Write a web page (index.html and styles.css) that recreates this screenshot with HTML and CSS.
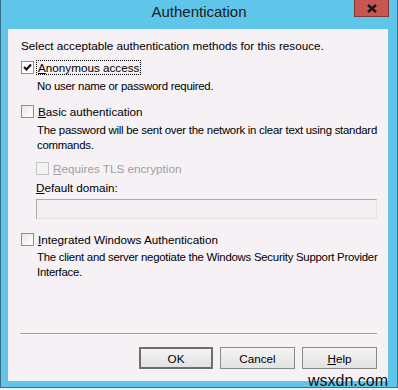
FILE: index.html
```html
<!DOCTYPE html>
<html>
<head>
<meta charset="utf-8">
<link rel="stylesheet" href="styles.css">
</head>
<body>
<div class="window">
  <div class="titlebar">
    <span class="title">Authentication</span>
    <div class="close"><svg width="10" height="9" viewBox="0 0 10 9"><path d="M1 1 L9 8 M9 1 L1 8" stroke="#1a1a1a" stroke-width="2.4"/></svg></div>
  </div>
  <div class="panel">
    <p class="intro">Select acceptable authentication methods for this resouce.</p>

    <div class="option first">
      <span class="box checked"><svg width="9" height="9" viewBox="0 0 9 9"><path d="M1 4 L3.5 6.5 L8 1.5" fill="none" stroke="#111" stroke-width="2.2"/></svg></span>
      <span class="label focus"><u>A</u>nonymous access</span>
    </div>
    <p class="desc">No user name or password required.</p>

    <div class="option">
      <span class="box"></span>
      <span class="label"><u>B</u>asic authentication</span>
    </div>
    <p class="desc">The password will be sent over the network in clear text using standard<br>commands.</p>

    <div class="option sub disabled">
      <span class="box"></span>
      <span class="label"><u>R</u>equires TLS encryption</span>
    </div>
    <p class="field-label"><u>D</u>efault domain:</p>
    <div class="input"></div>

    <div class="option after-input">
      <span class="box"></span>
      <span class="label"><u>I</u>ntegrated Windows Authentication</span>
    </div>
    <p class="desc last">The client and server negotiate the Windows Security Support Provider<br>Interface.</p>

    <div class="spacer"></div>
    <div class="separator"></div>
    <div class="buttons">
      <button class="btn default">OK</button>
      <button class="btn">Cancel</button>
      <button class="btn"><u>H</u>elp</button>
    </div>
  </div>
  <span class="watermark">wsxdn.com</span>
</div>
</body>
</html>
```

FILE: styles.css
```css
html, body {
  margin: 0;
  padding: 0;
  background: #eef1f3;
}
body {
  width: 398px;
  height: 390px;
  overflow: hidden;
  font-family: "Liberation Sans", Arial, sans-serif;
  font-size: 11.7px;
  color: #000;
}
.window {
  position: relative;
  box-sizing: border-box;
  width: 398px;
  height: 388px;
  background: #5fc6ea;
  border: 1px solid #3b6f88;
  border-top: none;
  padding: 0 9px 6px 7px;
  display: flex;
  flex-direction: column;
}
.titlebar {
  position: relative;
  height: 29px;
  flex: none;
  display: flex;
  align-items: center;
  justify-content: center;
}
.title {
  font-family: "Liberation Sans", Arial, sans-serif;
  font-size: 15px;
  color: #1c1c1c;
  margin-top: -6px;
  margin-left: 2px;
}
.close {
  position: absolute;
  top: 0;
  right: -1px;
  width: 33px;
  height: 16px;
  background: #c75551;
  border: 1px solid #7d3a35;
  border-top: none;
  display: flex;
  align-items: center;
  justify-content: center;
}
.panel {
  flex: 1;
  background: #f5f1f5;
  padding: 0 8px 0 13px;
  display: flex;
  flex-direction: column;
}
p { margin: 0; }
.intro {
  margin-top: 10px;
  line-height: 14px;
}
.option {
  display: flex;
  align-items: center;
  height: 15px;
  margin-top: 6px;
}
.option.first { margin-top: 7px; }
.box {
  box-sizing: border-box;
  width: 13px;
  height: 13px;
  border: 1px solid #8f8f8f;
  background: linear-gradient(135deg, #e6e6e6, #ffffff);
  display: flex;
  align-items: center;
  justify-content: center;
  flex: none;
}
.box.checked { background: #fff; }
.label {
  margin-left: 4px;
  line-height: 13px;
}
.label.focus {
  outline: 1px dotted #000;
  outline-offset: 0;
  padding: 0 1px;
  margin-left: 3px;
}
.desc {
  margin-top: 4px;
  padding-left: 16px;
  line-height: 15px;
  margin-bottom: 4px;
  white-space: nowrap;
  font-size: 11.4px;
  letter-spacing: -0.25px;
}
.desc.last { margin-top: 3px; }
.option.sub {
  padding-left: 15px;
  margin-top: 4px;
}
.disabled .label { color: #a0a0a0; }
.disabled .box { border-color: #c4c4c4; background: #f3f3f3; }
.field-label {
  padding-left: 15px;
  margin-top: 4px;
  line-height: 15px;
}
.input {
  margin: 4px 3px 0 15px;
  height: 20px;
  box-sizing: border-box;
  border: 1px solid #ababab;
  border-right-color: #e3e3e3;
  border-bottom-color: #e3e3e3;
  background: #f2eff2;
}
.option.after-input { margin-top: 13px; }
.spacer { flex: 1; }
.separator {
  height: 1px;
  background: #a0a0a0;
  border-bottom: 1px solid #fff;
  margin: 0 3px 0 -1px;
}
.buttons {
  display: flex;
  justify-content: flex-end;
  gap: 7px;
  margin: 12px 3px 12px 0;
}
.btn {
  box-sizing: border-box;
  width: 75px;
  height: 22px;
  font-family: "Liberation Sans", Arial, sans-serif;
  font-size: 11.7px;
  color: #000;
  background: linear-gradient(#f4f4f4, #e2e2e2);
  border: 1px solid #8a8a8a;
  border-radius: 0;
  padding: 0;
}
.btn.default {
  border: 2px solid #6e6e6e;
  width: 74px;
}
.watermark {
  position: absolute;
  right: 9px;
  bottom: -3px;
  font-size: 16px;
  color: #111;
  font-family: "Liberation Sans", Arial, sans-serif;
}
```
